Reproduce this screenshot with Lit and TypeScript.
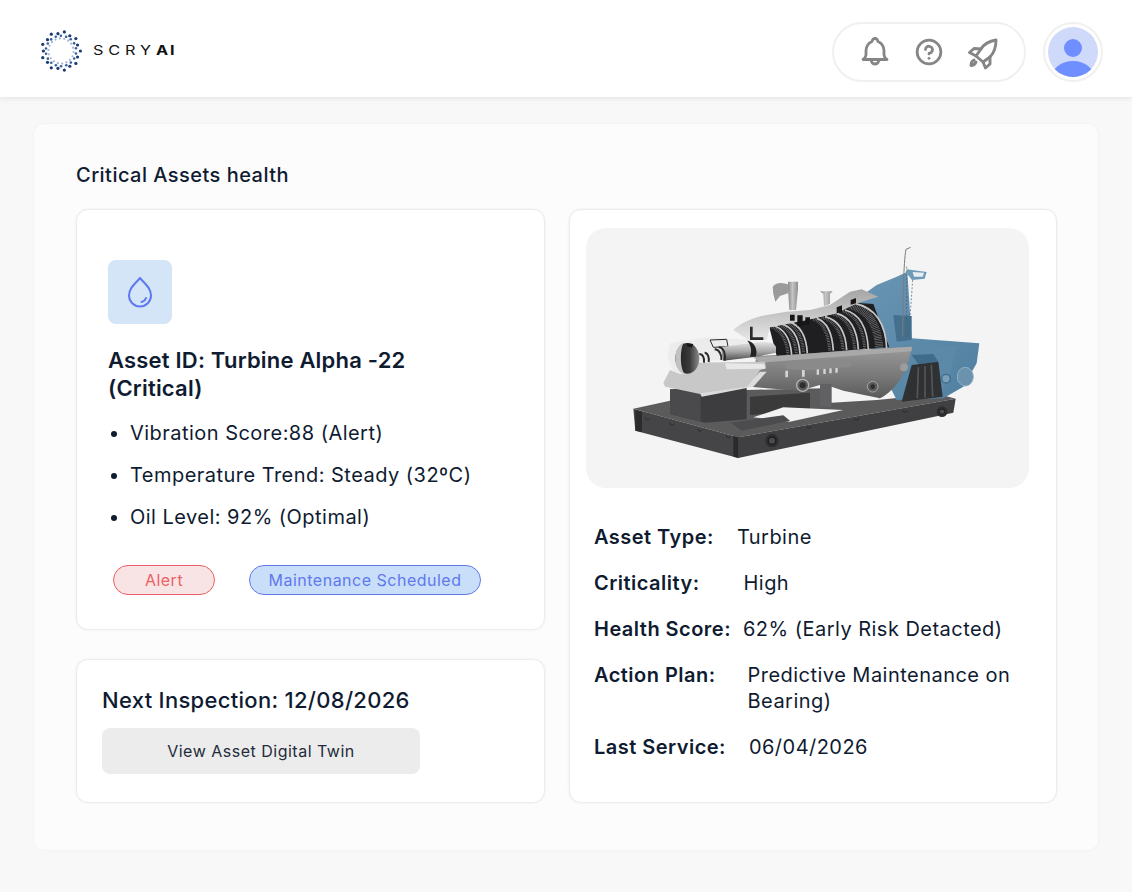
import { LitElement, css, html, svg } from 'lit';
import { customElement } from 'lit/decorators.js';

const details = [
  { label: 'Asset Type:', value: 'Turbine', gap: 23 },
  { label: 'Criticality:', value: 'High', gap: 44 },
  { label: 'Health Score:', value: '62% (Early Risk Detacted)', gap: 12 },
  { label: 'Action Plan:', value: 'Predictive Maintenance on Bearing)', gap: 32 },
  { label: 'Last Service:', value: '06/04/2026', gap: 23 },
];

const metrics = [
  'Vibration Score:88 (Alert)',
  'Temperature Trend: Steady (32ºC)',
  'Oil Level: 92% (Optimal)',
];

function logoDots() {
  const dots = [];
  const n = 18;
  for (let i = 0; i < n; i++) {
    const a = (i / n) * Math.PI * 2;
    const r1 = i % 2 ? 17.6 : 19.4;
    dots.push(svg`<circle cx=${21 + r1 * Math.cos(a)} cy=${21 + r1 * Math.sin(a)} r="1.6" fill="#1b3a72"></circle>`);
    const b = a + 0.17;
    dots.push(svg`<circle cx=${21 + 15.2 * Math.cos(b)} cy=${21 + 15.2 * Math.sin(b)} r="1.3" fill="#35609f"></circle>`);
    const c = a + 0.08;
    dots.push(svg`<circle cx=${21 + 12.6 * Math.cos(c)} cy=${21 + 12.6 * Math.sin(c)} r="1.1" fill="#a3b5d2"></circle>`);
  }
  return dots;
}

// rotor discs of the cut-away view: top x, top y, bottom x, bottom y
const discs = [
  [485, 285, 545, 375],
  [510, 280, 570, 372],
  [535, 275, 592, 370],
  [620, 265, 670, 362],
  [645, 260, 710, 360],
  [680, 250, 745, 358],
  [705, 240, 775, 358],
  [735, 220, 830, 355],
];

function rotorDiscs() {
  return discs.map(([tx, ty, bx, by], i) => {
    const ctrl = `${bx - 5} ${ty + (by - ty) * 0.15}`;
    const d = `M${tx} ${ty} Q${ctrl} ${bx} ${by}`;
    const back = `M${tx - 10} ${ty + 2} Q${bx - 17} ${ty + (by - ty) * 0.18} ${bx - 11} ${by}`;
    const wide = i === discs.length - 1;
    return svg`
      <path d=${wide ? `M${tx - 14} ${ty + 6} Q${bx - 30} ${ty + 25} ${bx - 22} ${by}` : back} fill="none" stroke="#77787a" stroke-width=${wide ? 24 : 9} stroke-dasharray="2 3"></path>
      <path d=${d} fill="none" stroke="#c6c6c6" stroke-width="5"></path>
    `;
  });
}

function turbine() {
  return svg`
    <defs>
      <linearGradient id="blue" x1="0" y1="0" x2="1" y2="1">
        <stop offset="0" stop-color="#6c97b6"></stop>
        <stop offset="1" stop-color="#4f7f9f"></stop>
      </linearGradient>
      <linearGradient id="shell" x1="0" y1="0" x2="0" y2="1">
        <stop offset="0" stop-color="#9a9a9a"></stop>
        <stop offset="0.55" stop-color="#7a7a7a"></stop>
        <stop offset="1" stop-color="#5a5a5a"></stop>
      </linearGradient>
      <linearGradient id="shaft" x1="0" y1="0" x2="0" y2="1">
        <stop offset="0" stop-color="#e4e4e4"></stop>
        <stop offset="0.5" stop-color="#a8a8a8"></stop>
        <stop offset="1" stop-color="#4b4b4b"></stop>
      </linearGradient>
      <linearGradient id="dome" x1="0" y1="0" x2="0" y2="1">
        <stop offset="0" stop-color="#a5a5a5"></stop>
        <stop offset="1" stop-color="#e6e6e6"></stop>
      </linearGradient>
      <linearGradient id="pipe" x1="0" y1="0" x2="1" y2="0">
        <stop offset="0" stop-color="#8a8a8a"></stop>
        <stop offset="0.45" stop-color="#c4c4c4"></stop>
        <stop offset="1" stop-color="#8f8f8f"></stop>
      </linearGradient>
      <linearGradient id="bore" x1="0" y1="0" x2="1" y2="0">
        <stop offset="0" stop-color="#1c1c1e"></stop>
        <stop offset="0.6" stop-color="#3a3a3c"></stop>
        <stop offset="1" stop-color="#8c8c8c"></stop>
      </linearGradient>
    </defs>

    <!-- base frame -->
    <path d="M70 536 L180 512 L180 528 L410 480 L640 475 L640 520 L800 510 L985 492 L1037 506 L385 622Z" fill="#5b5b5b"></path>
    <path d="M420 500 L600 488 L600 540 L420 555Z" fill="#3a3a3a"></path>
    <path d="M540 575 L700 540 L520 532 L430 562Z" fill="#f2f2f2"></path>
    <path d="M70 536 L385 622 L385 684 L76 602Z" fill="#454547"></path>
    <path d="M385 622 L1037 506 L1030 548 L385 684Z" fill="#404042"></path>
    <path d="M76 540 L96 546 L96 606 L76 602Z" fill="#2b2b2d"></path>
    <path d="M370 618 L386 622 L386 684 L370 680Z" fill="#2a2a2c"></path>
    <path d="M362 578 L520 556 L540 572 L396 602Z" fill="#4c4c4e"></path>
    <path d="M106 562 a6 6 0 0 0 12 3 M180 578 a6 6 0 0 0 12 3 M264 596 a6 6 0 0 0 12 3 M350 616 a6 6 0 0 0 12 3 M590 590 a6 6 0 0 0 12 -2 M734 566 a6 6 0 0 0 12 -2 M878 542 a6 6 0 0 0 12 -2" fill="none" stroke="#232325" stroke-width="2"></path>
    <circle cx="486" cy="632" r="20" fill="#2e2e30"></circle>
    <circle cx="486" cy="632" r="11" fill="#4c4c4e" stroke="#1e1e20" stroke-width="4"></circle>
    <circle cx="996" cy="545" r="16" fill="#2e2e30"></circle>
    <circle cx="996" cy="545" r="8" fill="#505052" stroke="#1e1e20" stroke-width="3"></circle>

    <!-- bearing block -->
    <path d="M180 478 L410 470 L410 568 L285 578 L180 552Z" fill="#3d3d3f"></path>
    <path d="M180 478 L272 490 L272 576 L180 552Z" fill="#4a4a4c"></path>

    <!-- blue exhaust casing -->
    <path d="M700 236 L800 165 L860 140 L892 125 L905 325 L1108 340 L1100 400 L1060 470 L1000 505 L860 510 L780 350Z" fill="url(#blue)"></path>
    <path d="M850 255 L905 258 L905 330 L860 335Z" fill="#44708e"></path>
    <path d="M890 345 L1040 348 L1020 430 L990 500 L880 470Z" fill="#5c89a8"></path>
    <path d="M905 375 L970 372 L985 395 L925 402Z" fill="#3f6c8a"></path>
    <circle cx="1008" cy="446" r="13" fill="#7aa0b9" stroke="#3f6c8a" stroke-width="4"></circle>
    <ellipse cx="1066" cy="440" rx="24" ry="28" fill="#6b93ae" stroke="#8fb0c5" stroke-width="3"></ellipse>
    <path d="M890 118 L950 126 L944 146 L906 150 L892 132Z" fill="#6e9ab8"></path>
    <path d="M908 126 L942 128 L938 140 L912 140Z" fill="#e7eef2"></path>
    <path d="M878 320 C880 200 880 100 888 58 L902 52" fill="none" stroke="#7c7c7c" stroke-width="3"></path>
    <path d="M890 110 L890 320 M908 150 L896 320" fill="none" stroke="#3f5f76" stroke-width="2" stroke-dasharray="6 5"></path>

    <!-- lower shell -->
    <path d="M440 378 L905 350 C895 420 860 480 810 505 L700 482 L640 462 L570 482 L470 475 L420 470Z" fill="url(#shell)"></path>
    <path d="M630 462 L665 462 L665 530 L630 530Z" fill="#616163"></path>
    <circle cx="578" cy="466" r="18" fill="#5b5b5d" stroke="#b4b4b4" stroke-width="4"></circle>
    <circle cx="578" cy="466" r="9" fill="#2f2f31"></circle>
    <circle cx="788" cy="470" r="16" fill="#5b5b5d" stroke="#a8a8a8" stroke-width="3"></circle>
    <circle cx="788" cy="470" r="7" fill="#2f2f31"></circle>
    <circle cx="882" cy="412" r="12" fill="#9c9c9c"></circle>
    <path d="M620 416 h7 v18 h-7z M640 414 h7 v18 h-7z M658 412 h7 v18 h-7z M676 410 h7 v18 h-7z M526 422 h8 v20 h-8z M576 420 h8 v20 h-8z" fill="#d6d6d6"></path>
    <path d="M905 405 L985 395 L998 500 L875 515Z" fill="#2f3133"></path>
    <path d="M925 412 L922 505 M945 408 L945 503 M964 404 L968 500" fill="none" stroke="#54565a" stroke-width="5"></path>

    <!-- rotor -->
    <path d="M478 292 L600 268 L680 250 L735 218 L790 222 L838 352 L500 378Z" fill="#1f1f21"></path>
    ${rotorDiscs()}
    <path d="M430 382 L905 350 L905 364 L450 398Z" fill="#a9a9a9"></path>
    <path d="M520 398 L720 385 L725 410 L600 420 L530 418Z" fill="#8a8a8a"></path>

    <!-- upper casing cut -->
    <path d="M370 300 C390 280 430 262 470 255 L530 245 L600 240 L660 225 L720 185 L755 178 L805 200 L745 218 L680 250 L600 268 L480 292 L470 330 L415 330Z" fill="url(#dome)"></path>
    <path d="M540 254 h14 v18 h-14z M562 256 h16 v20 h8 v-14 h14 v20 l-38 7z M680 232 l16 -6 v20 l-16 4z M722 210 l16 -6 v16 l-16 4z" fill="#161617"></path>
    <path d="M420 290 h8 v32 h32 v8 h-40z" fill="#2a2a2c"></path>
    <path d="M534 155 H564 V178 L558 240 H538 L534 178Z" fill="url(#pipe)"></path>
    <path d="M488 170 C500 155 520 158 536 164 L534 190 L510 198 L496 215 L490 192Z" fill="#9a9a9a"></path>
    <path d="M630 184 L668 184 L660 192 L660 222 L642 228 L640 192Z" fill="url(#pipe)"></path>

    <!-- front bearing housing + shaft -->
    <path d="M180 340 L290 322 L420 330 L440 378 L240 398 L240 430 L210 432 L188 420 L172 380Z" fill="#ececec"></path>
    <path d="M240 398 L465 395 L468 415 L450 420 L420 470 L270 492 L165 470 L160 458 L180 420 L210 432 L240 430Z" fill="#c8c8c8"></path>
    <path d="M345 400 L462 402 L466 416 L350 418Z" fill="#e8e8e8"></path>
    <path d="M270 490 L410 470 L450 425 L470 425 L430 470 L275 500Z" fill="#dcdcdc"></path>
    <ellipse cx="232" cy="385" rx="36" ry="46" fill="url(#bore)"></ellipse>
    <path d="M196 385 C196 358 210 340 222 338 C210 350 208 420 226 432 C208 432 196 410 196 385Z" fill="#c2c2c2"></path>
    <path d="M230 340 L250 342 L246 352 L232 350Z" fill="#161617"></path>
    <path d="M300 330 L350 328 L354 350 L310 352Z" fill="none" stroke="#2a2a2c" stroke-width="3"></path>
    <path d="M332 352 L430 338 C480 332 495 340 498 352 L498 368 L440 380 L340 392Z" fill="url(#shaft)"></path>
    <path d="M412 332 C440 336 444 372 436 380 L420 380 C426 366 424 346 412 332Z" fill="#232325"></path>
    <path d="M268 372 C278 372 284 384 282 398 M284 368 C294 368 298 384 296 396 M314 358 C328 358 336 376 334 390 M326 352 C342 352 348 376 344 392" fill="none" stroke="#2a2a2c" stroke-width="6"></path>
  `;
}

@customElement('app-root')
export class AppRoot extends LitElement {
  static styles = css`
    :host {
      display: block;
      min-height: 892px;
      background: #f8f8f8;
      font-family: Inter, 'Liberation Sans', sans-serif;
      color: #0f1b31;
      letter-spacing: 0.47px;
    }
    .header {
      height: 97px;
      background: #fff;
      box-shadow: 0 1px 6px rgba(0, 0, 0, 0.1);
      display: flex;
      align-items: center;
      justify-content: space-between;
      padding: 0 29px 0 40px;
      box-sizing: border-box;
    }
    .brand {
      display: flex;
      align-items: center;
      gap: 11px;
      margin-top: 5px;
    }
    .brand svg {
      display: block;
    }
    .wordmark {
      display: inline-block;
      font-size: 13px;
      font-weight: 400;
      letter-spacing: 3.9px;
      color: #111;
      white-space: nowrap;
      margin-top: -2px;
      transform: scaleX(1.25);
      transform-origin: left center;
    }
    .wordmark b {
      font-weight: 700;
      letter-spacing: 1.5px;
    }
    .tools {
      display: flex;
      align-items: center;
      gap: 17px;
      margin-top: 7px;
    }
    .pill {
      width: 194px;
      height: 60px;
      box-sizing: border-box;
      border: 2px solid #f0f0f0;
      border-radius: 30px;
      display: flex;
      align-items: center;
      justify-content: center;
    }
    .cell {
      width: 54.5px;
      display: flex;
      justify-content: center;
    }
    .pill svg {
      display: block;
      fill: none;
      stroke: #858585;
      stroke-linecap: round;
      stroke-linejoin: round;
    }
    .bell {
      width: 36px;
      height: 36px;
      stroke-width: 1.85;
    }
    .help {
      width: 30px;
      height: 30px;
      stroke-width: 2.2;
    }
    .rocket {
      width: 50px;
      height: 44px;
      stroke-width: 2.9;
    }
    .avatar {
      width: 60px;
      height: 60px;
      box-sizing: border-box;
      border: 2px solid #f0f0f0;
      border-radius: 50%;
      padding: 3px;
    }
    .avatar svg {
      display: block;
      width: 50px;
      height: 50px;
    }
    .panel {
      margin: 27px 34px 0;
      height: 726px;
      box-sizing: border-box;
      background: #fcfcfc;
      border-radius: 10px;
      box-shadow: 0 0 3px rgba(0, 0, 0, 0.05);
      padding: 38px 41px 0 42px;
    }
    .panel h2 {
      margin: 0 0 21px;
      font-size: 20px;
      font-weight: 500;
      line-height: 26px;
    }
    .grid {
      display: grid;
      grid-template-columns: 469px 488px;
      gap: 24px;
    }
    .stack {
      display: flex;
      flex-direction: column;
      gap: 29px;
    }
    .card {
      background: #fff;
      border: 1px solid #ececec;
      border-radius: 12px;
      box-shadow: 0 0 3px rgba(0, 0, 0, 0.06);
      box-sizing: border-box;
    }
    .asset {
      height: 421px;
      padding: 50px 31px 0;
    }
    .icon-box {
      width: 64px;
      height: 64px;
      background: #d4e5f7;
      border-radius: 8px;
      display: flex;
      align-items: center;
      justify-content: center;
    }
    .icon-box svg {
      width: 32px;
      height: 36px;
      fill: none;
      stroke: #5f79ee;
      stroke-width: 2;
      stroke-linecap: round;
      stroke-linejoin: round;
    }
    .asset h3 {
      margin: 22px 0 0;
      font-size: 22px;
      font-weight: 600;
      line-height: 28px;
      width: 340px;
      letter-spacing: 0.2px;
    }
    .asset ul {
      margin: 18px 0 0;
      padding: 0 0 0 22px;
      font-size: 20px;
      line-height: 26px;
    }
    .asset li + li {
      margin-top: 16px;
    }
    .badges {
      display: flex;
      gap: 34px;
      margin: 35px 0 0 5px;
    }
    .badge {
      height: 30px;
      box-sizing: border-box;
      border-radius: 15px;
      border: 1px solid;
      font-size: 16px;
      line-height: 28px;
      padding: 0 18px;
      letter-spacing: 0.5px;
    }
    .badge.alert {
      width: 102px;
      padding: 0;
      text-align: center;
      color: #ed5f64;
      background: #f8e4e4;
      border-color: #ed5f64;
    }
    .badge.info {
      width: 232px;
      padding: 0;
      text-align: center;
      color: #5f79ee;
      background: #c9def9;
      border-color: #5f79ee;
    }
    .next {
      height: 144px;
      padding: 25px 25px 0;
    }
    .next p {
      margin: 0 0 13px;
      font-size: 22px;
      font-weight: 500;
      line-height: 30px;
      letter-spacing: 0.3px;
    }
    .next button {
      display: block;
      width: 318px;
      height: 46px;
      border: 0;
      border-radius: 8px;
      background: #ececec;
      color: #232b3a;
      font: 400 16px Inter, 'Liberation Sans', sans-serif;
      letter-spacing: 0.5px;
      padding: 0;
    }
    .specs {
      height: 594px;
      padding: 18px 27px 0 16px;
    }
    .photo {
      height: 260px;
      background: #f4f4f4;
      border-radius: 20px;
    }
    .photo svg {
      display: block;
      width: 442px;
      height: 260px;
    }
    .rows {
      margin: 36px 0 0 8px;
      display: flex;
      flex-direction: column;
      gap: 20px;
      font-size: 20px;
      line-height: 26px;
    }
    .row {
      display: flex;
    }
    .row strong {
      font-weight: 600;
      white-space: nowrap;
    }
  `;

  render() {
    return html`
      <header class="header">
        <div class="brand">
          <svg width="42" height="42" viewBox="0 0 42 42">${logoDots()}</svg>
          <span class="wordmark">SCRY<b>AI</b></span>
        </div>
        <div class="tools">
          <div class="pill">
            <span class="cell">
              <svg class="bell" viewBox="0 0 24 24">
                <path d="M10 5a2 2 0 1 1 4 0a7 7 0 0 1 4 6v3a4 4 0 0 0 2 3H4a4 4 0 0 0 2-3v-3a7 7 0 0 1 4-6"></path>
                <path d="M9.500 17v.5a2.500 2.500 0 0 0 5 0v-.5"></path>
              </svg>
            </span>
            <span class="cell">
              <svg class="help" viewBox="0 0 24 24">
                <circle cx="12" cy="12" r="9.500"></circle>
                <path d="M12 17v.01"></path>
                <path d="M12 13.500v-.500a2.800 2.800 0 1 0-2.800-3"></path>
              </svg>
            </span>
            <span class="cell">
              <svg class="rocket" viewBox="0 0 50 44">
                <path d="M37 10C31 11 25 14 22 19L17 26L24 32L31 27C35 23 37 17 37 10Z"></path>
                <path d="M22 19L15 18.500L10.500 22.500L17 26"></path>
                <path d="M31 27L31 34L26.500 38L24 32"></path>
                <path d="M15 30C12.500 31 12 33 12 35.500C14.500 35.500 16 34 17 32"></path>
              </svg>
            </span>
          </div>
          <div class="avatar">
            <svg viewBox="0 0 50 50">
              <defs><clipPath id="disc"><circle cx="25" cy="25" r="25"></circle></clipPath></defs>
              <circle cx="25" cy="25" r="25" fill="#cfd9f9"></circle>
              <circle cx="25" cy="21" r="9" fill="#6f8eff"></circle>
              <ellipse cx="25" cy="50" rx="21" ry="16" fill="#6f8eff" clip-path="url(#disc)"></ellipse>
            </svg>
          </div>
        </div>
      </header>
      <main class="panel">
        <h2>Critical Assets health</h2>
        <div class="grid">
          <div class="stack">
            <section class="card asset">
              <div class="icon-box">
                <svg viewBox="0 0 32 36">
                  <path d="M16 4 C11 10 5 14 5 21.5 a11 11 0 0 0 22 0 C27 14 21 10 16 4Z"></path>
                  <path d="M22 24 a6 6 0 0 1-4.500 4"></path>
                </svg>
              </div>
              <h3>Asset ID: Turbine Alpha -22 (Critical)</h3>
              <ul>${metrics.map((m) => html`<li>${m}</li>`)}</ul>
              <div class="badges">
                <span class="badge alert">Alert</span>
                <span class="badge info">Maintenance Scheduled</span>
              </div>
            </section>
            <section class="card next">
              <p>Next Inspection: 12/08/2026</p>
              <button>View Asset Digital Twin</button>
            </section>
          </div>
          <section class="card specs">
            <div class="photo">
              <svg viewBox="-72 -6 1326 780">${turbine()}</svg>
            </div>
            <div class="rows">
              ${details.map(
                (d) => html`<div class="row" style="gap:${d.gap}px"><strong>${d.label}</strong><span>${d.value}</span></div>`
              )}
            </div>
          </section>
        </div>
      </main>
    `;
  }
}
